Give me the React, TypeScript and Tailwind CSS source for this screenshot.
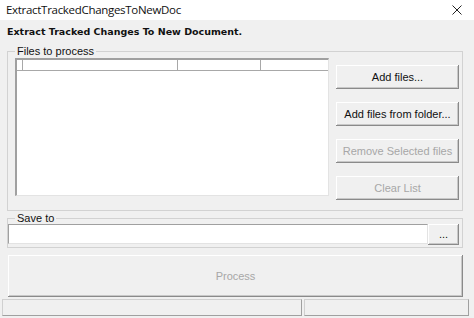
import React from 'react';

const ui = "font-['Liberation_Sans',_Arial,_sans-serif]";

function WinButton({ label, disabled, className = '' }: { label: string; disabled?: boolean; className?: string }) {
  return (
    <button
      className={`flex items-center justify-center bg-[#f0f0f0] text-[11px] leading-none shadow-[inset_-1px_-1px_#8a8a8a,inset_1px_1px_#ffffff,inset_-2px_-2px_#c8c8c8] ${
        disabled ? 'text-[#a7a7a7]' : 'text-[#111]'
      } ${className}`}
    >
      {label}
    </button>
  );
}

export default function App() {
  return (
    <div className={`w-[474px] h-[318px] bg-[#f0f0f0] flex flex-col overflow-hidden ${ui}`}>
      {/* title bar */}
      <div className="h-[20px] bg-white flex items-center justify-between pl-[6px] pr-[12px] shrink-0">
        <span className="font-['Open_Sans',_sans-serif] text-[11.5px] text-[#111] tracking-[-0.3px]">
          ExtractTrackedChangesToNewDoc
        </span>
        <svg width="10" height="10" viewBox="0 0 10 10" className="text-[#222]">
          <path d="M0.5 0.5 L9.5 9.5 M9.5 0.5 L0.5 9.5" stroke="currentColor" strokeWidth="1" />
        </svg>
      </div>

      {/* heading */}
      <div className="h-[25px] flex items-center pl-[7px] pb-[1px] shrink-0">
        <span className="font-['DejaVu_Sans',_sans-serif] text-[9.5px] font-bold text-[#111] leading-[12px]">
          Extract Tracked Changes To New Document.
        </span>
      </div>

      {/* files group */}
      <fieldset className="ml-[7px] w-[456px] h-[166px] border border-[#d2d2d2] pl-[7px] pt-[1px] flex gap-[7px] shrink-0">
        <legend className="px-[2px] text-[11px] leading-[12px] text-[#111]">Files to process</legend>
        <div className="flex gap-[7px]">
          <div className="w-[314px] h-[138px] bg-white border-l-2 border-t-2 border-[#a0a0a0] border-r border-b border-r-[#e3e3e3] border-b-[#e3e3e3] flex flex-col">
            <div className="h-[11px] flex border-b border-[#a8a8a8]">
              <div className="w-[6px] border-r border-[#a8a8a8]" />
              <div className="w-[155px] border-r border-[#a8a8a8]" />
              <div className="w-[83px] border-r border-[#a8a8a8]" />
              <div className="flex-1" />
            </div>
          </div>
          <div className="flex flex-col pt-[7px] gap-[13px]">
            <WinButton label="Add files..." className="w-[123px] h-[24px]" />
            <WinButton label="Add files from folder..." className="w-[123px] h-[24px]" />
            <WinButton label="Remove Selected files" disabled className="w-[123px] h-[24px]" />
            <WinButton label="Clear List" disabled className="w-[123px] h-[24px]" />
          </div>
        </div>
      </fieldset>

      {/* save to group */}
      <fieldset className="mt-[1px] ml-[7px] w-[456px] h-[36px] border border-[#d2d2d2] flex shrink-0">
        <legend className="ml-[7px] px-[2px] text-[11px] leading-[12px] text-[#111]">Save to</legend>
        <div className="flex">
          <div className="w-[420px] h-[20px] bg-white border-l border-t border-[#a0a0a0] border-b border-r border-b-[#e3e3e3] border-r-[#e3e3e3]" />
          <WinButton label="..." className="w-[31px] h-[21px] text-[9px] items-end pb-[5px]" />
        </div>
      </fieldset>

      {/* process */}
      <WinButton label="Process" disabled className="mt-[7px] ml-[8px] w-[455px] h-[42px] shrink-0" />

      {/* status bar */}
      <div className="mt-[2px] h-[17px] flex gap-[2px] pl-[2px] shrink-0">
        <div className="w-[300px] border border-t-[#d0d0d0] border-l-[#d0d0d0] border-b-[#a0a0a0] border-r-[#a0a0a0]" />
        <div className="w-[165px] border border-t-[#d0d0d0] border-l-[#d0d0d0] border-b-[#a0a0a0] border-r-[#a0a0a0]" />
      </div>
    </div>
  );
}
